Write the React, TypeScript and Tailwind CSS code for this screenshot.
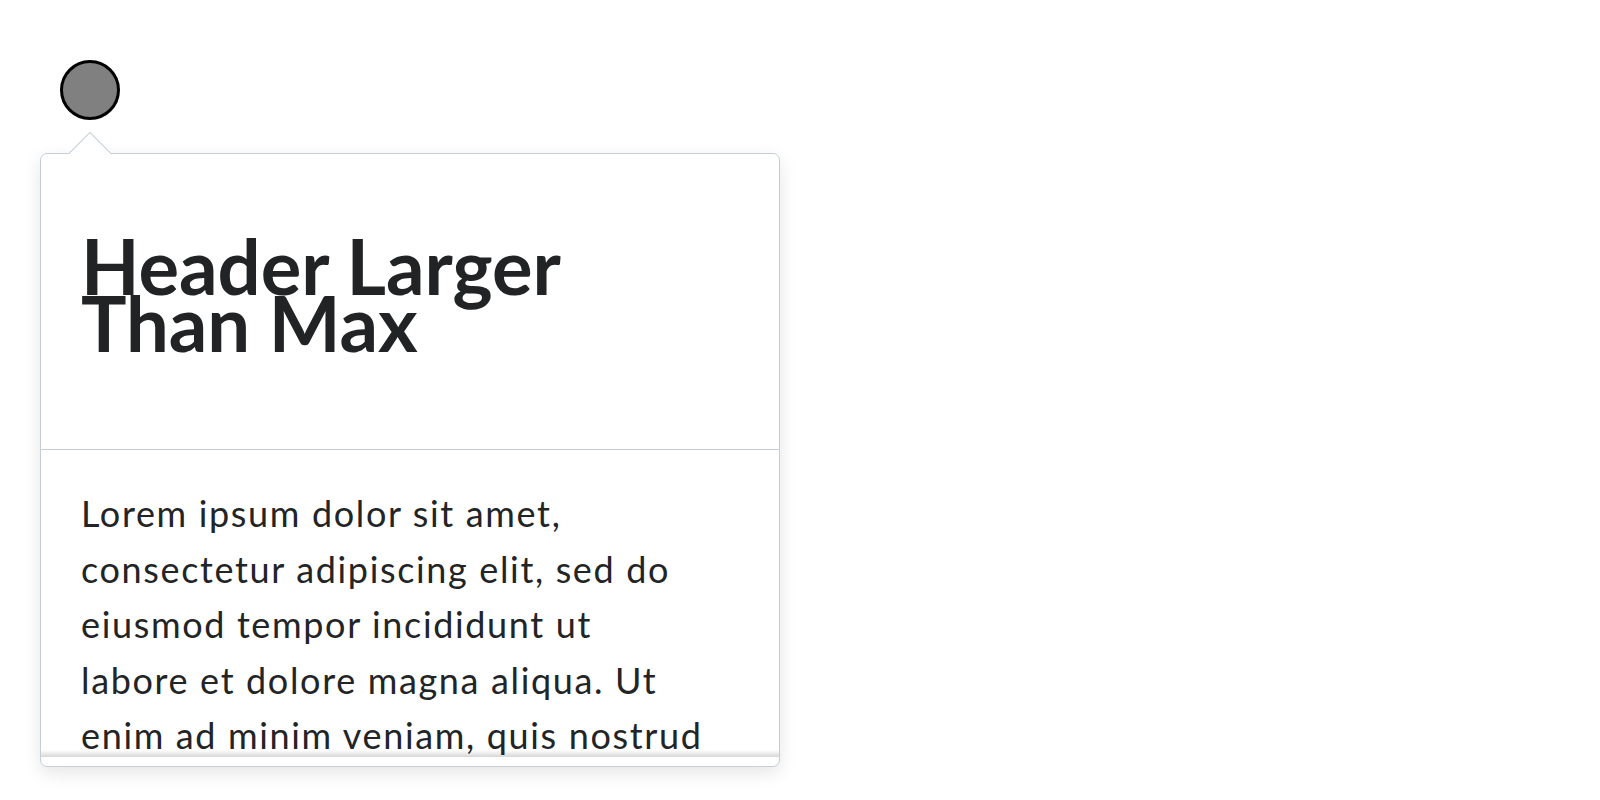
import React from "react";

const lorem =
  "Lorem ipsum dolor sit amet, consectetur adipiscing elit, sed do eiusmod tempor incididunt ut labore et dolore magna aliqua. Ut enim ad minim veniam, quis nostrud exercitation ullamco laboris nisi ut aliquip ex ea commodo consequat. Duis aute irure dolor in reprehenderit in voluptate velit esse cillum dolore eu fugiat nulla pariatur.";

const Popover = () => (
  <div className="relative mt-[33px] flex h-[614px] w-[740px] flex-col rounded-[7px] border border-[#c5ced7] bg-white shadow-[0_6px_18px_rgba(0,0,0,0.1)]">
    <span className="absolute left-[34px] top-[-16px] h-[30px] w-[30px] rotate-45 border-l border-t border-[#c5ced7] bg-white" />
    <header className="relative shrink-0 border-b border-[#c5ced7] px-10 pb-[98px] pt-[83px]">
      <h1 className="w-[624px] text-[76px] font-bold leading-[57px] text-[#212325]">Header Larger Than Max</h1>
    </header>
    <div className="relative min-h-0 flex-1 pb-[9px]">
      <div className="h-full overflow-hidden px-10 pt-[36px]">
        <p className="w-[626px] text-[36px] leading-[55.5px] tracking-[1.65px] text-[#222426]">{lorem}</p>
      </div>
      <div className="absolute bottom-[9px] left-0 right-0 h-[7px] bg-gradient-to-t from-[rgba(0,0,0,0.16)] to-transparent" />
    </div>
  </div>
);

export default function App() {
  return (
    <div className="min-h-[800px] w-full bg-white font-['Lato','Open_Sans',sans-serif]">
      <div className="flex flex-col items-start pl-[40px] pt-[60px]">
        <div className="ml-[20px] h-[60px] w-[60px] rounded-full border-[3px] border-black bg-[#808080]" />
        <Popover />
      </div>
    </div>
  );
}
